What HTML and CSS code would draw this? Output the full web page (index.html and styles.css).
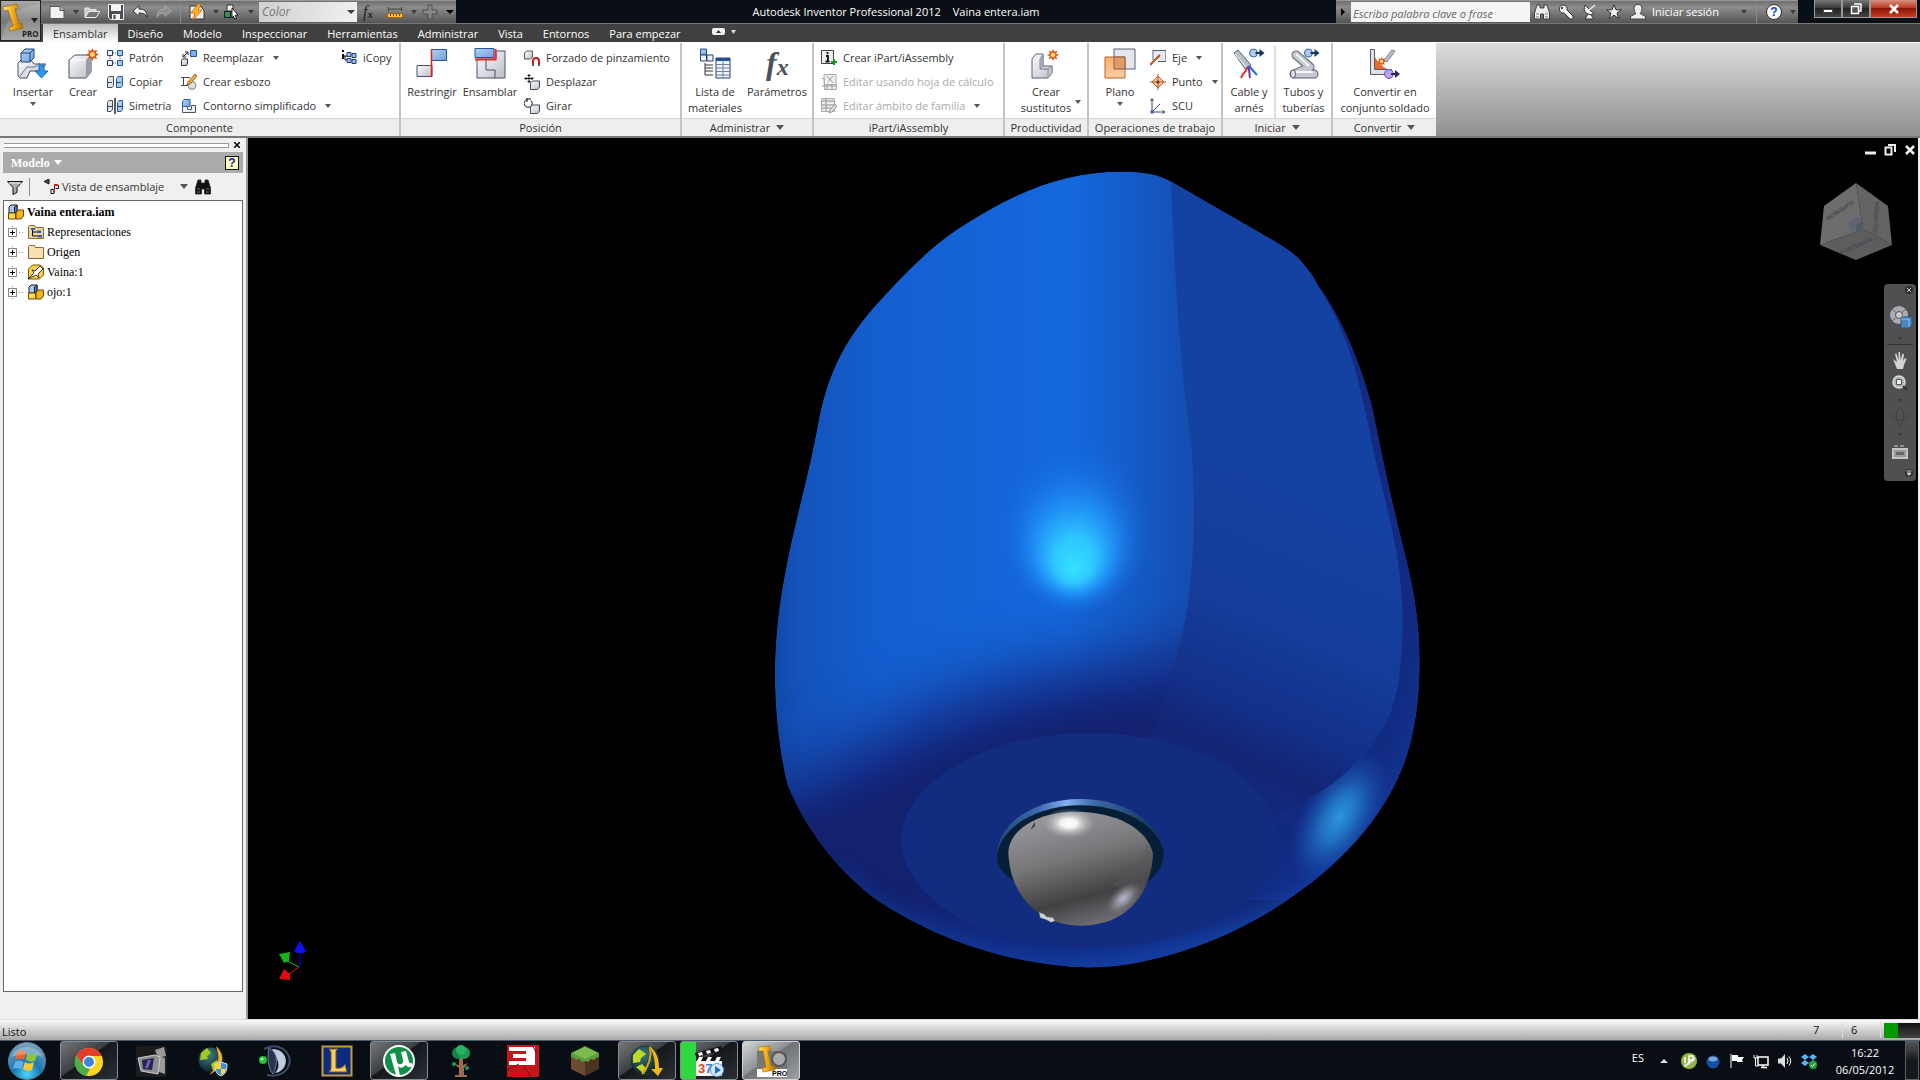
FILE: index.html
```html
<!DOCTYPE html>
<html lang="es">
<head>
<meta charset="utf-8">
<title>Autodesk Inventor Professional 2012 - Vaina entera.iam</title>
<link rel="stylesheet" href="styles.css">
</head>
<body>
<svg class="sprite" aria-hidden="true">
  <defs>
    <linearGradient id="g-steel" x1="0" y1="0" x2="1" y2="1"><stop offset="0" stop-color="#fff"/><stop offset="1" stop-color="#b9bec6"/></linearGradient>
    <linearGradient id="g-blue" x1="0" y1="0" x2="1" y2="1"><stop offset="0" stop-color="#b4d2f2"/><stop offset="1" stop-color="#6f9fdc"/></linearGradient>
    <linearGradient id="g-orange" x1="0" y1="0" x2="0" y2="1"><stop offset="0" stop-color="#fcae6c"/><stop offset="1" stop-color="#fbcda0"/></linearGradient>
    <linearGradient id="g-gold" x1="0" y1="0" x2="1" y2="0"><stop offset="0" stop-color="#ffe680"/><stop offset=".5" stop-color="#f0ac1c"/><stop offset="1" stop-color="#b87400"/></linearGradient>
    <radialGradient id="g-orb" cx=".5" cy=".85" r=".9"><stop offset="0" stop-color="#4fd6ff"/><stop offset=".4" stop-color="#1877b4"/><stop offset="1" stop-color="#8fa9ba"/></radialGradient>
    <radialGradient id="g-globe" cx=".4" cy=".3" r=".8"><stop offset="0" stop-color="#3f7d80"/><stop offset="1" stop-color="#04151e"/></radialGradient>
  </defs>
  <symbol id="new" viewBox="0 0 16 16"><path d="M1 2.500h10l4 4v8H1z" fill="#f2f2f2" stroke="#555"/><path d="M11 2.500v4h4" fill="#bbb" stroke="#555"/></symbol>
  <symbol id="open" viewBox="0 0 16 16"><path d="M1 13V4h4l1 1.500h6V8" fill="#ccc" stroke="#eee"/><path d="M1 13.500 5 7.500h11l-4 6z" fill="#777" stroke="#eee"/></symbol>
  <symbol id="save" viewBox="0 0 16 16"><path d="M.5.500h15v15h-13l-2-2z" fill="#4b4f57" stroke="#eee"/><path d="M3 1h10v6H3zM4 10h8v5H4z" fill="#f4f4f4"/><path d="M5.500 11h2v4h-2z" fill="#444"/></symbol>
  <symbol id="undo" viewBox="0 0 16 16"><path d="M1 7 7 1.500V5c5 0 8 2 8 8-1.500-3-4-4-8-4v3.500z" fill="#eee" stroke="#333"/></symbol>
  <symbol id="redo" viewBox="0 0 16 16"><path d="M15 7 9 1.500V5C4 5 1 7 1 13c1.500-3 4-4 8-4v3.500z" fill="#8d8d8d" stroke="#aaa"/></symbol>
  <symbol id="update" viewBox="0 0 16 16"><path d="M1 2h10l4 4v9H1z" fill="#eee" stroke="#333"/><path d="M9 0 2 9h4l-2 7 9-10H9l3-6z" fill="#ffb627" stroke="#d65a00" stroke-width=".8"/></symbol>
  <symbol id="pick" viewBox="0 0 16 16"><path d="M3 1h6v6H3z" fill="#eee" stroke="#333"/><path d="M.5 7.500h6v6h-6z" fill="#2f9a3b" stroke="#114"/><path d="m8 4 6 7-3 .3 1.500 3-2 .7-1-3L8 14z" fill="#fff" stroke="#000" stroke-width=".8"/></symbol>
  <symbol id="ruler" viewBox="0 0 16 16"><path d="M1.500 3v4M14.500 3v4M2 5h12" stroke="#444"/><path d="M.5 9.500h15v4H.5z" fill="#ffbe3b" stroke="#a76400"/><path d="M3.500 10v2m3-2v2m3-2v2m3-2v2" stroke="#704200"/></symbol>
  <symbol id="cross" viewBox="0 0 16 16"><path d="M6 1h4v5h5v4h-5v5H6v-5H1V6h5z" fill="#888" stroke="#4e4e4e"/></symbol>
  <symbol id="sun" viewBox="0 0 12 12"><path d="m6 0 1.300 2.800L10.200 1.700 9.200 4.700 12 6 9.200 7.300l1 3-2.900-1.100L6 12 4.700 9.200l-2.900 1.100 1-3L0 6l2.800-1.300-1-3 2.900 1.100z" fill="#e0541c"/><circle cx="6" cy="6" r="2.300" fill="#ffe16b"/></symbol>
  <symbol id="insert" viewBox="0 0 32 32"><path d="M1 15 4 12h10l3 4h12l-6 7H13l-3 7H3l-2-2z" fill="url(#g-steel)" stroke="#44506a"/><path d="m3 28 7-9h8l5-4" fill="none" stroke="#6a7488"/><path d="M4 5 8 1h9v9l-4 4H4z" fill="url(#g-blue)" stroke="#1b4585"/><path d="M4 5h9v9m0-9 4-4" fill="none" stroke="#1b4585"/><path d="M22 17h5v6h4l-6.500 7L18 23h4z" fill="#2e97f5" stroke="#1065b8"/></symbol>
  <symbol id="create" viewBox="0 0 32 32"><path d="m2 12 6-5h16v17l-5 6H2z" fill="url(#g-steel)" stroke="#475068"/><path d="M19 30V12l5-5v17z" fill="#999ea6"/><path d="M3 12h16" fill="none" stroke="#fff"/><use href="#sun" x="19" y="0" width="13" height="13"/></symbol>
  <symbol id="pattern" viewBox="0 0 16 16"><path d="M.5.500h5v5h-5zM.5 10.500h5v5h-5z" fill="#eef2f8" stroke="#253d70"/><path d="M10.500.500h5v5h-5zM10.500 10.500h5v5h-5z" fill="#a9c8ee" stroke="#1d55a4"/><path d="M6 3h4M6 13h4M3 6v4m10-4v4" stroke="#253d70" stroke-dasharray="1 1"/></symbol>
  <symbol id="copy" viewBox="0 0 16 16"><path d="M.5 4.500 2 2.500h4.500v9l-1.500 2H.5z" fill="#dfe3ea" stroke="#444d60"/><path d="M9.500 4.500l1.500-2h4.500v9l-1.500 2H9.500z" fill="#a9c8ee" stroke="#1d55a4"/><path d="M.5 8.500H5M9.500 8.500H14" stroke="#345"/></symbol>
  <symbol id="mirror" viewBox="0 0 16 16"><path d="M.5 4.500 2 2.500h3.500v9l-1.500 2H.5z" fill="#dfe3ea" stroke="#444d60"/><path d="M10.500 4.500l1.500-2h3.500v9l-1.500 2h-3.500z" fill="#a9c8ee" stroke="#1d55a4"/><path d="M0 8.500h5M10 8.500h5" stroke="#345"/><path d="M8 0v16" stroke="#223" stroke-width="1.500"/></symbol>
  <symbol id="replace" viewBox="0 0 16 16"><path d="M9.500.500h6v6h-6z" fill="#7eb0ee" stroke="#1d55a4"/><path d="m.5 10.500 1-1.500h5v5l-1 1.500h-5z" fill="url(#g-steel)" stroke="#333"/><path d="m2.500 6.500 4-4M4 2h3v3M2 4v3h3" fill="none" stroke="#222"/></symbol>
  <symbol id="sketch" viewBox="0 0 16 16"><path d="M0 3.500h9M2.500 3.500v8M0 11.500h7" fill="none" stroke="#444"/><circle cx="11" cy="11.500" r="4" fill="#ddd" stroke="#888"/><path d="m6 11 1-3 7-8 2 2-7 8z" fill="#f5a93c" stroke="#704c12" stroke-width=".8"/></symbol>
  <symbol id="contour" viewBox="0 0 16 16"><path d="M1.500 3.500 3 1.500h6v7H1.500z" fill="url(#g-blue)" stroke="#1f5fae"/><path d="M1.500 8.500h5v3h4v-4h4v7h-13z" fill="#eceff3" stroke="#4b5468"/></symbol>
  <symbol id="icopy" viewBox="0 0 16 16"><path d="M2 0v2M2 4v5" stroke="#111" stroke-width="2"/><path d="M6 2.500h4v4H6zM11 3.500h4v4h-4zM6 8.500h4v4H6zM11 9.500h4v4h-4z" fill="#9cc0ec" stroke="#1c3b78"/><path d="M3 6h3M4 6v4h2" stroke="#111" fill="none"/></symbol>
  <symbol id="constrain" viewBox="0 0 32 32"><path d="M1 17.500h15v11H1z" fill="url(#g-steel)" stroke="#44506a"/><path d="M15.500 1.500h15v11h-15z" fill="url(#g-blue)" stroke="#26559b"/><path d="M15.500 1v28" stroke="#f01818" stroke-width="1.500"/></symbol>
  <symbol id="assemble" viewBox="0 0 32 32"><path d="M3 11h19V3h9v27H3z" fill="url(#g-steel)" stroke="#44506a"/><path d="M12 12v10h9v8" fill="none" stroke="#44506a"/><path d="M1 .5h19v9H1z" fill="url(#g-blue)" stroke="#26559b"/><path d="M1 11.500h20.500V1" fill="none" stroke="#ed2525" stroke-width="2"/></symbol>
  <symbol id="grip" viewBox="0 0 16 16"><path d="m.5 3 2-2h6v6l-2 2h-6z" fill="url(#g-steel)" stroke="#555"/><path d="M9 15v-4a3 3 0 0 1 6 0v4" fill="none" stroke="#c02222" stroke-width="2"/><path d="M8 14h2v2H8zM14 14h2v2h-2z" fill="#555"/></symbol>
  <symbol id="move" viewBox="0 0 16 16"><path d="M5 0v9M.500 4.500h9M3.500 1.500h3M3.500 7.500h3M2 3v3m6-3v3" stroke="#111"/><path d="m6.500 9 2-2h7v6l-2 2.500h-7z" fill="url(#g-steel)" stroke="#444d60"/></symbol>
  <symbol id="rotate" viewBox="0 0 16 16"><path d="M3 1.500a4 4 0 1 0 4 1M3 0v4M3 1h4" fill="none" stroke="#111"/><path d="m6.500 9 2-2h7v6l-2 2.500h-7z" fill="url(#g-steel)" stroke="#444d60"/></symbol>
  <symbol id="bom" viewBox="0 0 32 32"><path d="M1.500 1h6v6h-6z" fill="url(#g-blue)" stroke="#26559b"/><path d="M1.500 7h6v6h-6zM8 7h6v6H8z" fill="#eef2f8" stroke="#26406f"/><path d="M6 15v12M6 17h8M6 20h8M6 23h8M6 27h8" stroke="#333" fill="none"/><path d="M17 10h14v20H17z" fill="#f1f5fa" stroke="#26406f"/><path d="M17 10h14v3H17z" fill="#244d8b"/><path d="M17 16.500h14M17 20h14M17 23.500h14M17 27h14M24 12v18" stroke="#6c83a4"/></symbol>
  <symbol id="ipart" viewBox="0 0 16 16"><path d="M.5.500h12v13H.5z" fill="#eee" stroke="#444"/><path d="M6.500 2v2M5 6h2v5M4.500 11.500h4" stroke="#111" stroke-width="1.800" fill="none"/><path d="M13 9v6M10 12h6" stroke="#109a18" stroke-width="2"/></symbol>
  <symbol id="excel" viewBox="0 0 16 16"><path d="M3 .5h12v10H3zM.500 4.500h3v11h12v-5" fill="#eee" stroke="#aaa"/><path d="m6 2 6 7m0-7L6 9M1 12h14M6 10v5m5-5v5" stroke="#999"/></symbol>
  <symbol id="family" viewBox="0 0 16 16"><path d="M.5.500h13v13H.5z" fill="#eee" stroke="#aaa"/><path d="M0 3h14M0 7h14M0 10h10M5 1v12" stroke="#aaa" stroke-width="1.500"/><path d="m8 15 1-3 5-6 2 2-5 6z" fill="#ddd" stroke="#999"/></symbol>
  <symbol id="substitute" viewBox="0 0 32 32"><path d="m2 11 4-5h7v12h9v7l-4 5H2z" fill="url(#g-steel)" stroke="#566074"/><path d="m10 11 3-5v12l-3 3z" fill="#b0b5bd" stroke="#8b929f"/><path d="M10 21h8v9l4-5v-7l-4 3z" fill="#c3c7ce" stroke="#8b929f"/><use href="#sun" x="17" y="1" width="12" height="12"/></symbol>
  <symbol id="plane" viewBox="0 0 32 32"><path d="M10 1h21v20H10z" fill="#e3e6ea" stroke="#566074"/><path d="M1 9h20v21H1z" fill="url(#g-orange)" stroke="#b9602a"/><path d="M10 9h11v12H10z" fill="#df9a66" stroke="#8a5f50"/></symbol>
  <symbol id="axis" viewBox="0 0 16 16"><path d="M3 .5h13v11H8" fill="#e4e7ec" stroke="#566074"/><path d="M3 0v10" stroke="#566074"/><path d="m0 15 10-10" stroke="#b25526" stroke-width="2"/></symbol>
  <symbol id="point" viewBox="0 0 16 16"><path d="m8 2 6 6-6 6-6-6z" fill="#fac49a" stroke="#c06530"/><path d="M8 0v16M0 8h16" stroke="#b25526"/><circle cx="8" cy="8" r="1.500" fill="#6b2e0c"/></symbol>
  <symbol id="ucs" viewBox="0 0 16 16"><path d="M2 14V1M.5 3 2 .5 3.500 3M2 14h13m-2.500-1.500L15 14l-2.500 1.500M2 14l8-8" fill="none" stroke="#3e4657"/><path d="M.5 12.500h3v3h-3z" fill="#2465c9"/></symbol>
  <symbol id="export" viewBox="0 0 16 10"><circle cx="5" cy="5" r="4" fill="#aecbea" stroke="#33639f"/><path d="M7 4h4V1l5 4-5 4V6H7z" fill="#16355e"/></symbol>
  <symbol id="cable" viewBox="0 0 32 32"><path d="m1 5 4-3 13 15-5 5z" fill="#b8bec7" stroke="#59616f"/><path d="m2 6 12 14" stroke="#fff"/><path d="M14 19c0 6-4 4-6 11" stroke="#e03030" stroke-width="2" fill="none"/><path d="M15 18c2 4 1 7 2 12" stroke="#6c35a8" stroke-width="2" fill="none"/><path d="m16 18 8 9" stroke="#2470cf" stroke-width="2"/><use href="#export" x="15" y="0" width="17" height="10"/></symbol>
  <symbol id="tubes" viewBox="0 0 32 32"><path d="m8 7 14 12-16 7h20" fill="none" stroke="#555d6c" stroke-width="9" stroke-linejoin="round" stroke-linecap="round"/><path d="m8 7 14 12-16 7h20" fill="none" stroke="#c3c8d0" stroke-width="7" stroke-linejoin="round" stroke-linecap="round"/><path d="m8 6 13 12M7 24h18" stroke="#f4f6f8" stroke-width="2"/><ellipse cx="5" cy="26" rx="2.500" ry="4" fill="#dfe3e8" stroke="#555d6c"/><use href="#export" x="15" y="0" width="17" height="10"/></symbol>
  <symbol id="weld" viewBox="0 0 32 32"><path d="M1.500 1.500h4v20h17v5h-21z" fill="#dfe3e8" stroke="#555d6c"/><path d="M6 9q4 8 12 12H6z" fill="#ee6a2a"/><path d="m15 12 8-10 3 1-8 11z" fill="#b8bec7" stroke="#7d8593"/><use href="#sun" x="8" y="9" width="9" height="9"/><circle cx="20" cy="26" r="4.500" fill="#b9a6e8" stroke="#6b4bb4"/><path d="M22 25h4v-3l5 4-5 4v-3h-4z" fill="#33205e"/></symbol>
  <symbol id="binoc" viewBox="0 0 16 16"><path d="M3 1h3v3h4V1h3l2.500 8v6h-6v-5h-3v5h-6V9z" fill="currentColor" stroke="#222" stroke-width=".8"/><path d="M2 10h3M11 10h3M2 13h3M11 13h3" stroke="#777"/></symbol>
  <symbol id="key" viewBox="0 0 16 16"><path d="M5 1a4 4 0 0 1 4 5l6 6v3h-3L6 9a4 4 0 1 1-1-8z" fill="#f0f0f0" stroke="#333"/><circle cx="4" cy="4" r="1.200" fill="#444"/></symbol>
  <symbol id="dish" viewBox="0 0 16 16"><path d="M3 1c-3 7 3 11 9 9zM6 10l-3 5h9l-3-4" fill="#eee" stroke="#333"/><path d="m7 6 6-5" stroke="#eee" stroke-width="1.500"/></symbol>
  <symbol id="star" viewBox="0 0 16 16"><path d="m8 .8 2 5h5.300L11 9l1.700 5.500L8 11.200l-4.700 3.300L5 9 .7 5.800H6z" fill="#f0f0f0" stroke="#333"/></symbol>
  <symbol id="person" viewBox="0 0 16 16"><path d="M8 .5c3 0 4 2 4 4s-1 4-2 5l5.500 3v2.500H.5v-2.500l5.500-3c-1-1-2-3-2-5s1-4 4-4z" fill="#f0f0f0" stroke="#444"/></symbol>
  <symbol id="funnel" viewBox="0 0 16 16"><path d="M.5 2.500h15l-5.500 6v5l-4 2v-7z" fill="#aaa" stroke="#111"/><path d="M2 4h12" stroke="#eee"/></symbol>
  <symbol id="view" viewBox="0 0 16 16"><path d="M1 2.500 6 0v5z" fill="#555" stroke="#111"/><path d="M8 14.500h3v-4h-3zM11.500 10V6.500h4v3h-3" fill="#fff" stroke="#111"/><path d="M11 6h4M11 10.500v3" stroke="#e01b1b" stroke-width="2"/></symbol>
  <symbol id="asm" viewBox="0 0 16 16"><path d="m1 3 2-2h6v8H1z" fill="#a8cbe8" stroke="#111b33"/><path d="M6.500 9V3L9 1v7z" fill="#5c83b8" stroke="#111b33"/><path d="M.5 9h7v6h-7z" fill="#ffd84c" stroke="#6e4700"/><path d="m8 9 2-3h5.500v6L13 15H8z" fill="#f4b41c" stroke="#6e4700"/></symbol>
  <symbol id="folder" viewBox="0 0 16 16"><path d="M.5 14.500v-12l1-1h5l1 2h8v11z" fill="#f8dfb0" stroke="#8b6a3c"/></symbol>
  <symbol id="folder-tree" viewBox="0 0 16 16"><path d="M.5 14.500v-12l1-1h5l1 2h8v11z" fill="#f1d19c" stroke="#8b6a3c"/><path d="M4.500 5v7h6M4.500 8h5" stroke="#111" fill="none"/><path d="M3 4h4v2H3zM9 6.500h4v2.500H9zM10 11h4v2.500h-4z" fill="#2c64b0"/></symbol>
  <symbol id="part" viewBox="0 0 16 16"><path d="m.5 5 4-4h8l3 3v7l-4 4h-11z" fill="#f8d04a" stroke="#855200"/><path d="m0 15 6-6-2-3 3 1 5-5 3 3-5 5 1 4-3-3z" fill="#fff" stroke="#111" stroke-width=".8"/></symbol>
</svg>

<header class="titlebar">
  <button class="app" aria-label="Menú de la aplicación"><svg width="40" height="40" viewBox="0 0 40 40"><path d="M1 39C4 16 18 5 39 3v36z" fill="#fff" opacity=".16"/><path d="m2 6 14-3 1 4-3 1 4 15 3-1 1 5-13 3-1-4 4-1L7 9 3 10z" fill="url(#g-gold)" stroke="#8a5a00" stroke-width=".6"/><path d="M30 17h7l-3.500 5z" fill="#1e2530"/><text x="21" y="36" font-family="Open Sans, sans-serif" font-size="8" font-weight="bold" fill="#222">PRO</text></svg></button>
  <div class="qat">
    <button aria-label="Nuevo"><svg><use href="#new"/></svg></button><i class="caret"></i>
    <button aria-label="Abrir"><svg><use href="#open"/></svg></button>
    <button aria-label="Guardar"><svg><use href="#save"/></svg></button>
    <button aria-label="Deshacer"><svg><use href="#undo"/></svg></button>
    <button aria-label="Rehacer"><svg><use href="#redo"/></svg></button>
    <i class="vsep"></i>
    <button aria-label="Actualizar"><svg><use href="#update"/></svg></button><i class="caret"></i>
    <button aria-label="Seleccionar"><svg><use href="#pick"/></svg></button><i class="caret"></i>
    <span class="combo"><select aria-label="Color"><option>Color</option></select><i class="caret"></i></span>
    <button aria-label="Parámetros" class="fx"><i>f</i><b>x</b></button>
    <button aria-label="Medir"><svg><use href="#ruler"/></svg></button><i class="caret"></i>
    <button aria-label="Añadir"><svg><use href="#cross"/></svg></button>
    <i class="caret more"></i>
  </div>
  <h1 class="title"><span>Autodesk Inventor Professional 2012</span><span>Vaina entera.iam</span></h1>
  <div class="info">
    <button class="expand" aria-label="Contraer"><i></i></button>
    <input type="text" placeholder="Escriba palabra clave o frase" aria-label="Buscar">
    <button aria-label="Buscar"><svg><use href="#binoc"/></svg></button>
    <button aria-label="Suscripción"><svg><use href="#key"/></svg></button>
    <button aria-label="Comunicación"><svg><use href="#dish"/></svg></button>
    <button aria-label="Favoritos"><svg><use href="#star"/></svg></button>
    <button class="login"><svg><use href="#person"/></svg>Iniciar sesión</button>
    <i class="caret"></i><i class="vsep"></i>
    <button class="help" aria-label="Ayuda">?</button><i class="caret"></i>
  </div>
  <div class="winbtns">
    <button aria-label="Minimizar"><svg width="12" height="10"><path d="M1.500 5.500h9v3h-9z" fill="#fff" stroke="#444"/></svg></button>
    <button aria-label="Restaurar"><svg width="12" height="12"><path d="M4 1h7v7H9M1.500 3.500h7v7h-7z" fill="#555" stroke="#fff" stroke-width="1.500"/></svg></button>
    <button class="close" aria-label="Cerrar"><svg width="12" height="10"><path d="m2 1 8 8m0-8L2 9" stroke="#fff" stroke-width="2.500"/></svg></button>
  </div>
</header>

<nav class="tabs">
  <a href="#" class="on">Ensamblar</a><a href="#">Diseño</a><a href="#">Modelo</a><a href="#">Inspeccionar</a><a href="#">Herramientas</a><a href="#">Administrar</a><a href="#">Vista</a><a href="#">Entornos</a><a href="#">Para empezar</a>
  <button class="collapse" aria-label="Minimizar cinta"><svg width="24" height="10"><rect x="0" y="1" width="13" height="7" rx="2" fill="#f2f2f2"/><path d="m4 6 2.500-3L9 6z" fill="#333"/><path d="M19 3h5l-2.500 4z" fill="#ddd"/></svg></button>
</nav>

<div class="ribbon">
  <section class="panel p-comp">
    <div class="tools">
      <button class="big w58"><svg><use href="#insert"/></svg><span>Insertar</span><i class="caret"></i></button>
      <button class="big w42"><svg><use href="#create"/></svg><span>Crear</span></button>
      <div class="col w74">
        <button class="sm"><svg><use href="#pattern"/></svg>Patrón</button>
        <button class="sm"><svg><use href="#copy"/></svg>Copiar</button>
        <button class="sm"><svg><use href="#mirror"/></svg>Simetría</button>
      </div>
      <div class="col w160">
        <button class="sm"><svg><use href="#replace"/></svg>Reemplazar<i class="caret"></i></button>
        <button class="sm"><svg><use href="#sketch"/></svg>Crear esbozo</button>
        <button class="sm"><svg><use href="#contour"/></svg>Contorno simplificado<i class="caret"></i></button>
      </div>
      <div class="col"><button class="sm"><svg><use href="#icopy"/></svg>iCopy</button></div>
    </div>
    <h2>Componente</h2>
  </section>
  <section class="panel p-pos">
    <div class="tools">
      <button class="big w54"><svg><use href="#constrain"/></svg><span>Restringir</span></button>
      <button class="big w62"><svg><use href="#assemble"/></svg><span>Ensamblar</span></button>
      <div class="col">
        <button class="sm"><svg><use href="#grip"/></svg>Forzado de pinzamiento</button>
        <button class="sm"><svg><use href="#move"/></svg>Desplazar</button>
        <button class="sm"><svg><use href="#rotate"/></svg>Girar</button>
      </div>
    </div>
    <h2>Posición</h2>
  </section>
  <section class="panel p-adm">
    <div class="tools">
      <button class="big w58"><svg><use href="#bom"/></svg><span>Lista de<br>materiales</span></button>
      <button class="big w66"><span class="bigfx"><i>f</i><b>x</b></span><span>Parámetros</span></button>
    </div>
    <h2>Administrar<i class="caret big-caret"></i></h2>
  </section>
  <section class="panel p-ipart">
    <div class="tools"><div class="col">
      <button class="sm"><svg><use href="#ipart"/></svg>Crear iPart/iAssembly</button>
      <button class="sm" disabled><svg><use href="#excel"/></svg>Editar usando hoja de cálculo</button>
      <button class="sm" disabled><svg><use href="#family"/></svg>Editar ámbito de familia<i class="caret"></i></button>
    </div></div>
    <h2>iPart/iAssembly</h2>
  </section>
  <section class="panel p-prod">
    <div class="tools"><button class="big w74"><svg><use href="#substitute"/></svg><span>Crear<br>sustitutos</span></button><i class="caret side"></i></div>
    <h2>Productividad</h2>
  </section>
  <section class="panel p-oper">
    <div class="tools">
      <button class="big w54"><svg><use href="#plane"/></svg><span>Plano</span><i class="caret"></i></button>
      <div class="col">
        <button class="sm"><svg><use href="#axis"/></svg>Eje<i class="caret"></i></button>
        <button class="sm"><svg><use href="#point"/></svg>Punto<i class="caret"></i></button>
        <button class="sm"><svg><use href="#ucs"/></svg>SCU</button>
      </div>
    </div>
    <h2>Operaciones de trabajo</h2>
  </section>
  <section class="panel p-ini">
    <div class="tools">
      <button class="big w50"><svg><use href="#cable"/></svg><span>Cable y<br>arnés</span></button>
      <i class="divider"></i>
      <button class="big half"><svg><use href="#tubes"/></svg><span>Tubos y<br>tuberías</span></button>
    </div>
    <h2>Iniciar<i class="caret big-caret"></i></h2>
  </section>
  <section class="panel p-conv">
    <div class="tools"><button class="big half"><svg><use href="#weld"/></svg><span>Convertir en<br>conjunto soldado</span></button></div>
    <h2>Convertir<i class="caret big-caret"></i></h2>
  </section>
</div>

<main class="work">
  <aside class="browser">
    <div class="grip"><i></i><button aria-label="Cerrar panel"><svg width="6" height="6"><path d="m0 0 6 6M6 0 0 6" stroke="#000" stroke-width="1.500"/></svg></button></div>
    <div class="bhead"><button class="model">Modelo<i class="caret big-caret"></i></button><button class="note" aria-label="Ayuda">?</button></div>
    <div class="btools">
      <button aria-label="Filtro"><svg width="16" height="16"><use href="#funnel"/></svg></button><i class="vsep"></i>
      <button class="viewsel"><svg width="16" height="16"><use href="#view"/></svg>Vista de ensamblaje<i class="caret big-caret"></i></button>
      <button class="find" aria-label="Buscar"><svg width="16" height="16"><use href="#binoc"/></svg></button>
    </div>
    <ul class="tree">
      <li class="root"><svg><use href="#asm"/></svg>Vaina entera.iam</li>
      <li><b></b><svg><use href="#folder-tree"/></svg>Representaciones</li>
      <li><b></b><svg><use href="#folder"/></svg>Origen</li>
      <li><b></b><svg><use href="#part"/></svg>Vaina:1</li>
      <li><b></b><svg><use href="#asm"/></svg>ojo:1</li>
    </ul>
  </aside>
  <section class="viewport">
    <svg class="scene" viewBox="0 0 1670 881" preserveAspectRatio="xMidYMid meet" role="img" aria-label="Modelo Vaina entera">
      <defs>
        <linearGradient id="front" gradientUnits="userSpaceOnUse" x1="76" y1="0" x2="990" y2="0"><stop offset="0" stop-color="#1349a8"/><stop offset=".06" stop-color="#1453bb"/><stop offset=".25" stop-color="#145fd0"/><stop offset=".7" stop-color="#1468dc"/><stop offset=".85" stop-color="#145cc8"/><stop offset="1" stop-color="#144daf"/></linearGradient>
        <linearGradient id="side" gradientUnits="userSpaceOnUse" x1="1150" y1="600" x2="960" y2="1120"><stop offset="0" stop-color="#1442a2"/><stop offset=".5" stop-color="#143c98"/><stop offset=".78" stop-color="#133088"/><stop offset=".95" stop-color="#132474"/><stop offset="1" stop-color="#13277a"/></linearGradient>
        <radialGradient id="spec" gradientUnits="userSpaceOnUse" cx="0" cy="0" r="1" fx="0" fy=".5" gradientTransform="translate(728 705) scale(170 165)"><stop offset="0" stop-color="#35e0ff"/><stop offset=".25" stop-color="#2ec8ff"/><stop offset=".5" stop-color="#2298fa" stop-opacity=".85"/><stop offset=".75" stop-color="#1c7eec" stop-opacity=".35"/><stop offset="1" stop-color="#1468dc" stop-opacity="0"/></radialGradient>
        <radialGradient id="spec2"><stop offset="0" stop-color="#2b96de"/><stop offset=".35" stop-color="#2583d0" stop-opacity=".8"/><stop offset="1" stop-color="#1550b4" stop-opacity="0"/></radialGradient>
        <linearGradient id="ring" x1="0" x2="1" y1="0" y2="0"><stop offset="0" stop-color="#1c4a78"/><stop offset=".25" stop-color="#3b6cb0"/><stop offset=".42" stop-color="#82b0f0"/><stop offset=".58" stop-color="#3d6aa8"/><stop offset="1" stop-color="#0f2f50"/></linearGradient>
        <linearGradient id="ball" gradientUnits="userSpaceOnUse" x1="300" y1="155" x2="390" y2="495"><stop offset="0" stop-color="#98989c"/><stop offset=".4" stop-color="#77777a"/><stop offset=".76" stop-color="#414143"/><stop offset=".9" stop-color="#5c5c60"/><stop offset="1" stop-color="#6c6c71"/></linearGradient>
        <radialGradient id="shine"><stop offset="0" stop-color="#fff"/><stop offset=".3" stop-color="#fff" stop-opacity=".9"/><stop offset="1" stop-color="#aaa" stop-opacity="0"/></radialGradient>
        <radialGradient id="shine2"><stop offset="0" stop-color="#b8b8cc"/><stop offset=".4" stop-color="#a0a0b2" stop-opacity=".75"/><stop offset="1" stop-color="#777" stop-opacity="0"/></radialGradient>
        <filter id="soft" x="-30%" y="-50%" width="160%" height="200%" color-interpolation-filters="sRGB"><feGaussianBlur stdDeviation="64"/></filter>
        <filter id="soft2" x="-30%" y="-50%" width="160%" height="200%" color-interpolation-filters="sRGB"><feGaussianBlur stdDeviation="26"/></filter>
        <path id="hull" d="M830 40C880 40 915 47 935 57L1170 173C1215 195 1240 222 1260 255C1310 315 1345 385 1375 475C1400 580 1420 660 1448 755C1470 830 1480 890 1480 960C1478 1030 1470 1085 1450 1135C1415 1225 1330 1320 1200 1395C1080 1470 900 1526 760 1526C560 1520 400 1460 290 1395C200 1335 140 1260 103 1185C85 1120 76 1050 76 980C76 870 100 770 133 655C150 595 157 570 168 520C188 425 220 365 290 295C350 238 405 188 470 150C590 82 700 40 830 40Z"/>
        <clipPath id="hullclip"><use href="#hull"/></clipPath>
        <clipPath id="sideclip"><path d="M1175 1235C1330 1180 1425 1110 1443 880L1600 800V1568H100V1400L763 1300Z"/></clipPath>
      </defs>
      <g transform="translate(492 12) scale(.4592 .5357)">
        <g clip-path="url(#hullclip)">
          <use href="#hull" fill="url(#front)"/>
          <path d="M-300 1290L-100 1240L150 1165C300 1090 500 985 800 955L1300 920V1900H-300Z" fill="#13257a" filter="url(#soft)"/>
          <path d="M-300 1330L-100 1290C250 1250 420 1100 800 1048L1300 1020V1900H-300Z" fill="#13226e" filter="url(#soft2)"/>
          <ellipse cx="728" cy="705" rx="170" ry="165" fill="url(#spec)"/>
          <path d="M938 57C950 300 960 400 984 560C992 680 990 750 975 850C955 960 915 1050 890 1100L1000 1300L1500 1250V200L1170 100Z" fill="url(#side)"/>
          <path d="M1260 255C1330 350 1350 440 1370 520C1395 640 1443 740 1443 880C1443 1000 1420 1050 1400 1080C1350 1160 1270 1205 1175 1235L1000 1400H1600V200Z" fill="#122a80"/>
          <path d="M150 1460C330 1400 500 1440 763 1440H1600V1900H0Z" fill="#122a80" filter="url(#soft2)"/>
          <g clip-path="url(#sideclip)">
            <path d="M1560 900C1530 1200 1380 1380 1050 1500L600 1620V1800H1800V900Z" fill="#144fb8" filter="url(#soft)"/>
            <ellipse cx="0" cy="0" rx="80" ry="145" fill="url(#spec2)" transform="translate(1305 1245) rotate(38)"/>
          </g>
          <path d="M200 1370C350 1500 560 1535 760 1535C960 1535 1120 1480 1300 1380" fill="none" stroke="#154cb8" stroke-width="40" opacity=".75" filter="url(#soft2)"/>
          <ellipse cx="763" cy="1289" rx="411" ry="201" fill="#122c80"/>
        </g>
      </g>
      <g transform="translate(712 622) scale(.3333)">
        <path d="M111 280C118 185 225 117 361 117S600 185 611 280C608 320 590 345 562 365H162C125 335 113 310 111 280Z" fill="url(#ring)"/>
        <path d="M111 285C125 195 240 136 361 136S592 190 611 275C610 320 595 340 562 365H162C125 335 111 320 111 285Z" fill="#061f36"/>
        <path d="M145 275C150 205 240 155 345 155C470 155 560 205 579 280C576 400 500 497 365 497C230 497 148 400 145 275Z" fill="url(#ball)"/>
        <ellipse cx="327" cy="190" rx="80" ry="46" fill="url(#shine)"/>
        <path d="M460 372Q540 330 560 250L577 285Q570 360 530 420Z" fill="#59595c" opacity=".4"/>
        <ellipse cx="0" cy="0" rx="64" ry="34" fill="url(#shine2)" transform="translate(490 415) rotate(-42)"/>
        <path d="m225 185-14 25 14-12z" fill="#333"/>
        <path d="m237 457 16 6 6 7 20 3 6 10-12 4-14-8-18-6z" fill="#d2d2d6" stroke="#666"/>
      </g>
      <g transform="translate(21 802)">
        <path d="M31 27V8" stroke="#00f"/><path d="M31 1l6 10-3 2h-6l-3-2z" fill="#1010f0"/><path d="m30 27-12-6" stroke="#12c81a"/><path d="m10 14 11-2-1 9-5 2z" fill="#12b41c"/><path d="M30 27 17 36" stroke="#e81010"/><path d="m15 29 6 5v6l-11-1z" fill="#e00c0c"/>
      </g>
    </svg>
    <div class="docbtns">
      <button aria-label="Minimizar documento"><svg width="12" height="12"><path d="M1 7.500h11v3H1z" fill="#eee"/></svg></button>
      <button aria-label="Restaurar documento"><svg width="12" height="12"><path d="M4 1h7v7M1.500 3.500h6v7h-6z" fill="none" stroke="#eee" stroke-width="2"/></svg></button>
      <button aria-label="Cerrar documento"><svg width="12" height="12"><path d="m2 2 8 8m0-8-8 8" stroke="#eee" stroke-width="2.500"/></svg></button>
    </div>
    <svg class="cube" width="74" height="80" viewBox="0 0 74 80" role="img" aria-label="ViewCube">
      <path d="M37 2 5 25 1 64 44 48z" fill="#6d6d6d"/><path d="m37 2 32 23 4 39-29-16z" fill="#646464"/><path d="M44 48 1 64l36 15 36-15z" fill="#5d5d5d"/>
      <path d="m37 36 7 4v8l-7 4-7-4v-8z" fill="#5f656c"/><path d="m37 44 7-4v8l-7 4z" fill="#545a62"/>
      <g font-family="Liberation Sans, sans-serif" font-weight="bold" font-size="6" fill="#454a52"><text transform="translate(33 19) rotate(147)">SUPERIOR</text><text transform="translate(58 53) rotate(-86)">IZQUIERDA</text><text transform="translate(22 74) rotate(-24)">POSTERIOR</text></g>
    </svg>
    <div class="navbar">
      <svg width="32" height="196" viewBox="0 0 32 196" aria-hidden="true">
        <circle cx="25" cy="6" r="4" fill="#2e2e2e"/><path d="m23 4 4 4m0-4-4 4" stroke="#ccc"/>
        <circle cx="15" cy="31" r="9" fill="#a9adb2"/><path d="m8 25 14 12m0-12L8 37" stroke="#666"/><circle cx="15" cy="31" r="3.500" fill="#ccc" stroke="#555"/><path d="m17 35 3-2h8v8l-3 3h-8z" fill="#4a88be" stroke="#24588c"/><path d="M17 35h8v8" fill="none" stroke="#8cbde6"/>
        <path d="M13 53h5l-2.500 3zM13 115h5l-2.500 3zM13 149h5l-2.500 3z" fill="#373b42"/><path d="M3 60.500h26" stroke="#333"/>
        <path d="m9 75 4 3-2-8 1.500-.5 2 7V68H16l.5 8 2-6.500 1.500.5-1 7 2-3 1.500 1-2.500 6-1 4h-6z" fill="#d2d2d2"/>
        <circle cx="15" cy="98" r="6" fill="#aeb5b5" stroke="#d8dcdc" stroke-width="1.500"/><path d="M12.500 95.500h5v5h-5z" fill="#eee" stroke="#555"/><path d="m19 102 4 4" stroke="#333" stroke-width="2"/>
        <path d="M8 130c-2 3 1 6 8 6s9-3 8-6M16 124c-5 2-5 14 0 17 5-3 5-15 0-17z" fill="none" stroke="#3c4048"/>
        <path d="M9 165h14v9H9z" fill="#999" stroke="#c4c4c4" stroke-width="2"/><path d="M12 168h8v3h-8z" fill="#666"/><path d="M10 162h10" stroke="#ccc" stroke-dasharray="4 2"/>
        <circle cx="25" cy="189" r="4" fill="#2e2e2e"/><path d="M22.500 187h5M23 189h4l-2 2.500z" stroke="#ccc" fill="#ccc"/>
      </svg>
    </div>
  </section>
</main>

<footer class="status"><span class="msg">Listo</span><span class="cell">7</span><span class="cell">6</span><i class="meter"></i></footer>

<div class="taskbar">
  <button class="orb" aria-label="Inicio"><svg width="40" height="40" viewBox="0 0 40 40"><circle cx="20" cy="20" r="18.500" fill="url(#g-orb)" stroke="#53809a"/><path d="M10 11q4-3 9 0l-2 8q-4-3-9 0z" fill="#f0642a"/><path d="M20.500 12q5 3 10 0l-2.500 8q-4 2-9-1z" fill="#8cc63c"/><path d="M8 21q4-3 8.500 0l-2 7q-4-2-8.500 0z" fill="#5fb2ee"/><path d="M18 21q4 3 9 0l-2 8q-4 2-9-1z" fill="#ffc830"/><path d="M4 16a17 15 0 0 1 32 0q-16-6-32 0z" fill="#fff" opacity=".28"/></svg></button>
  <button class="task run" aria-label="Chrome"><svg width="32" height="32" viewBox="0 0 32 32"><circle cx="16" cy="17" r="14" fill="#ffd41f"/><path d="M3.500 10.500A14 14 0 0 1 28.500 11H16l-6 9z" fill="#e33b2e"/><path d="M3.500 10.500 10 20l7 4-4 7A14 14 0 0 1 3.500 10.500z" fill="#4fae48"/><circle cx="16" cy="17" r="6.500" fill="#fff"/><circle cx="16" cy="17" r="5" fill="#3f86d8"/></svg></button>
  <button class="task" aria-label="Grabador"><svg width="32" height="32" viewBox="0 0 32 32"><rect x="1" y="1" width="31" height="31" rx="3" fill="#1c1c1e"/><path d="m20 5 9-3 2 9-8 2zM24 11l6 2v16l-6-2z" fill="#999"/><path d="m3 13 17-3 5 2-2 17-17-3z" fill="#8f8f93" stroke="#ccc"/><path d="m7 15 12-2-2 12-9-1z" fill="#25264a"/><path d="m13 15 3 0-3 8h-3z" fill="#6a63c4"/></svg></button>
  <button class="task" aria-label="Red segura"><svg width="32" height="32" viewBox="0 0 32 32"><circle cx="14" cy="15" r="12.500" fill="url(#g-globe)"/><path d="m4 8 6-5 4 5-4 3 1 3-8 1zM14 19l6-4 3 5-7 6z" fill="#a3c820"/><path d="M19 1c10 9 8 22-7 29 11-10 11-18 7-29z" fill="#f0b21c"/><path d="m24 17 6 2c0 6-1 10-6 12-5-2-6-6-6-12z" fill="#3c90dc" stroke="#dde"/><path d="M24 18v6h-5.500l-.5-5zM24 24h5c-1 4-3 5-5 6z" fill="#ffd33b"/></svg></button>
  <button class="task" aria-label="TeamSpeak"><svg width="32" height="32" viewBox="0 0 32 32"><path d="M5 4C20-4 34 8 30 20c-3 9-13 12-22 10" fill="none" stroke="#3d4c66" stroke-width="2"/><path d="M13 4c18 0 18 22 3 24 7-7 2-15-3-24z" fill="#c0cbe0"/><path d="M10 3c8 4 10 14 4 26-5-5-6-18-4-26z" fill="#28344c" stroke="#6b7a98"/><circle cx="4" cy="15" r="4" fill="#23c23b"/><circle cx="3" cy="14" r="1.500" fill="#aef5a8"/></svg></button>
  <button class="task" aria-label="League"><svg width="32" height="32" viewBox="0 0 32 32"><rect x="1.500" y="1.500" width="29" height="29" fill="#0c2c84" stroke="#c89a3c" stroke-width="2"/><path d="M8 4h9l-2 2v17q7 1 9-4l2 8H8l2-3V7z" fill="#f3cc6c" stroke="#7b5316"/></svg></button>
  <button class="task run" aria-label="uTorrent"><svg width="34" height="34" viewBox="0 0 34 34"><circle cx="17" cy="17" r="15" fill="#11904a" stroke="#fff" stroke-width="2"/><path d="M8 10l5-1 2 9q1 3 4 2 3-1 2-4l-2-8 5-1 3 11q1 2 3 1l1 3q-5 3-7-1-5 5-8 1l2 10-4-1z" fill="#fff"/></svg></button>
  <button class="task" aria-label="Terraria"><svg width="32" height="32" viewBox="0 0 32 32"><path d="M14 12h4v8l5-2-4 5v7h3v2H10v-2h4z" fill="#9a6b4c"/><path d="M14 20l-5-1 5 4z" fill="#9a6b4c"/><circle cx="13" cy="8" r="6" fill="#17834b"/><circle cx="19" cy="8" r="6" fill="#1d9a55"/><circle cx="16" cy="5" r="5" fill="#2bb365"/><circle cx="9" cy="19" r="2" fill="#1d9a55"/><circle cx="22" cy="23" r="2" fill="#1d9a55"/></svg></button>
  <button class="task" aria-label="Juego 3"><svg width="32" height="32" viewBox="0 0 32 32"><path d="M0 0h32v32H0z" fill="#c4141c"/><path d="M2 2h26v18H2v-4h17v-3H6V9h13V6H2z" fill="#fff"/><path d="m16 20 8 12M0 25l12-6M25 0l5 9" stroke="#7b0c12"/></svg></button>
  <button class="task" aria-label="Minecraft"><svg width="32" height="32" viewBox="0 0 32 32"><path d="m2 8 14 6v17L2 24z" fill="#6d4a33"/><path d="m30 8-14 6v17l14-7z" fill="#4c3222"/><path d="M16 1 2 8v4l3 1 2 2 3-1 3 3 3-1 3 1 3-3 3 1 2-2 3-1V8z" fill="#5f9a3b"/><path d="m16 2 13 6-13 6L3 8z" fill="#7cbc4c"/></svg></button>
  <button class="task run" aria-label="jDownloader"><svg width="32" height="32" viewBox="0 0 32 32"><circle cx="14" cy="15" r="14" fill="url(#g-globe)" stroke="#123a40"/><path d="m2 10 6-6 7 5-5 4-1 4-7 1zM5 22l6-3 5 5-3 5z" fill="#c1d827"/><path d="M19 2c2 10-2 20-8 27" fill="none" stroke="#e0a312" stroke-width="2"/><path d="M18 1c8 5 10 14 10 22h4l-5 8-7-7h4c0-8-1-16-6-23z" fill="#f7b518"/></svg></button>
  <button class="task run progress" aria-label="Reproductor"><svg width="32" height="32" viewBox="0 0 32 32"><path d="m2 8 26-7 1 5L3 12z" fill="#111"/><path d="m5 8 4-1 1 3-4 1zM13 6l4-1 1 3-4 1zM21 4l4-1 1 3-4 1z" fill="#fff"/><path d="M3 12h26v19H3z" fill="#f6f6f6"/><path d="M3 12h26v4H3z" fill="#111"/><path d="M6 12h4l-2 4H4zM15 12h4l-2 4h-4zM24 12h4l-2 4h-4z" fill="#fff"/><text x="5" y="28" font-family="Liberation Sans, sans-serif" font-weight="bold" font-size="13"><tspan fill="#d84b1c">3</tspan><tspan fill="#3a7fd2">7</tspan></text><circle cx="24" cy="25" r="6.500" fill="#d8eafa" stroke="#5a98d8"/><path d="m22 21 6 4-6 4z" fill="#1d6cc2"/></svg></button>
  <button class="task run active" aria-label="Inventor"><svg width="32" height="32" viewBox="0 0 32 32"><path d="M2 6h30v26H2z" fill="#777"/><circle cx="24" cy="14" r="7" fill="#aaa" stroke="#555" stroke-width="2"/><path d="M2 24h30v8H2z" fill="#fff"/><path d="m3 2 12-1 1 4-3 1 3 15 4-1v5l-12 2-1-4 4-1L8 6H4z" fill="url(#g-gold)" stroke="#9a6400" stroke-width=".6"/><text x="17" y="31" font-family="Liberation Sans, sans-serif" font-size="7" font-weight="bold">PRO</text></svg></button>
  <div class="tray">
    <span class="lang">ES</span>
    <button class="up" aria-label="Mostrar iconos ocultos"><i></i></button>
    <svg width="16" height="16" viewBox="0 0 16 16"><circle cx="8" cy="8" r="8" fill="#90b83c"/><path d="m2 13 12-9v3L5 14z" fill="#ddd"/><path d="M4 4v6M8 3h4v4H8zV10" stroke="#fff" stroke-width="1.500" fill="none"/></svg>
    <svg width="16" height="16" viewBox="0 0 16 16"><circle cx="8" cy="9" r="6.500" fill="#154fa6"/><ellipse cx="8" cy="6" rx="4.500" ry="2.500" fill="#79a4de"/></svg>
    <svg width="16" height="16" viewBox="0 0 16 16"><path d="M2 1v14" stroke="#fff"/><path d="M3 2h6v2h6l-2 3 1 2H8V8H3z" fill="#fff"/></svg>
    <svg width="16" height="16" viewBox="0 0 16 16"><path d="M5 4h10v8H5zM8 14.500h6M10 12v2" fill="none" stroke="#fff" stroke-width="1.500"/><path d="M1 2v3h3V2M2.500 5v8h3" fill="none" stroke="#fff"/></svg>
    <svg width="16" height="16" viewBox="0 0 16 16"><path d="M1 5.500h3L8 1v14l-4-4.500H1z" fill="#ddd"/><path d="M10 5q2 3 0 6M12 3.500q3.500 4.500 0 9" stroke="#fff" fill="none"/></svg>
    <svg width="16" height="16" viewBox="0 0 16 16"><path d="m4 1 4 3-4 3-4-3zM12 1l4 3-4 3-4-3zM4 7l4 3-4 3-4-3zM12 7l4 3-4 3-4-3z" fill="#58b0ee"/><circle cx="12" cy="12" r="4" fill="#1ea33c"/><path d="m10 12 1.500 1.500L14 10.500" stroke="#fff" fill="none"/></svg>
    <time class="clock">16:22<br>06/05/2012</time>
    <button class="desk" aria-label="Mostrar escritorio"></button>
  </div>
</div>
</body>
</html>
```
FILE: styles.css
```css
* { box-sizing: border-box; }
body {
  margin: 0;
  height: 100vh;
  display: flex;
  flex-direction: column;
  overflow: hidden;
  background: #404040;
  color: #333;
  font: 11px/16px "Open Sans", "Noto Sans", sans-serif;
}
button { margin: 0; padding: 0; border: 0; background: none; color: inherit; font: inherit; }
h1, h2, ul { margin: 0; padding: 0; font: inherit; }
.sprite { position: absolute; width: 0; height: 0; }

.caret { flex: none; width: 0; height: 0; border: 3px solid transparent; border-top: 4px solid #555; border-bottom: 0; }
.big-caret { border-width: 4px; border-top-width: 5px; border-bottom: 0; }
.vsep { flex: none; width: 1px; height: 100%; background: #8a8a8a; }

/* title bar */
.titlebar { position: relative; flex: none; height: 24px; display: flex; background: #0a0e15; border-bottom: 1px solid #777; color: #fff; }
.app { position: absolute; z-index: 2; left: 0; top: 0; width: 41px; height: 41px; border: 1px solid #222; background: linear-gradient(#aaa, #777 50%, #9a9a9a); }
.app svg { display: block; }
.qat { flex: none; width: 456px; padding-left: 49px; display: flex; align-items: center; background: linear-gradient(#6f6f6f, #8c8c8c 30%, #555); border-top: 1px solid #999; }
.qat button, .info button { flex: none; width: 16px; height: 16px; margin-right: 8px; }
.qat svg, .info svg { display: block; width: 16px; height: 16px; }
.qat .caret { margin-right: 5px; border-top-color: #3c3c3c; }
.qat .vsep { margin-right: 8px; }
.combo { position: relative; flex: none; width: 98px; height: 20px; margin-right: 6px; }
.combo select { display: block; appearance: none; width: 100%; height: 100%; padding: 0 3px; border: 0; border-radius: 0; background: linear-gradient(90deg, #d0d0d0, #f0f0f0); color: #777; font: italic 12px/20px "Open Sans", sans-serif; }
.qat .combo .caret { position: absolute; right: 2px; top: 8px; margin: 0; border-width: 4px; border-bottom: 0; }
.fx { display: flex; color: #222; font: 16px/16px "Liberation Serif", serif; }
.qat .fx { font: 16px/16px "Liberation Serif", serif; }
.fx b { font: italic bold 11px/20px "Liberation Serif", serif; }
.qat .more { margin: 0; border-width: 4px; border-bottom: 0; border-top-color: #000; }
.title { flex: 1; display: flex; justify-content: center; gap: 12px; line-height: 24px; }
.info { flex: none; width: 462px; display: flex; align-items: center; background: linear-gradient(#6f6f6f, #8c8c8c 30%, #555); border-top: 1px solid #999; }
.info .expand { width: 15px; height: 100%; margin: 0; }
.expand i { display: block; margin-left: 5px; width: 0; border: 4px solid transparent; border-left: 4px solid #000; border-right: 0; }
.info input { flex: none; width: 179px; height: 20px; margin-right: 4px; padding: 3px 2px 0; border: 0; background: #f4f4f4; font: italic 11px/16px "Open Sans", sans-serif; }
.info input::placeholder { color: #666; opacity: 1; }
.info button { color: #eee; }
.info .login { width: auto; display: flex; gap: 6px; margin-right: 22px; color: #fff; }
.info .caret { border-top-color: #3c3c3c; margin-right: 9px; }
.info .vsep { margin-right: 9px; }
.info .help { border: 1px solid #333; border-radius: 8px; background: #f6f8fc; color: #1746b0; font: bold 12px/14px "Liberation Sans", sans-serif; }
.winbtns { flex: none; width: 122px; height: 18px; padding: 0 3px 0 16px; display: flex; }
.winbtns button { width: 28px; display: flex; align-items: center; justify-content: center; border: 1px solid #999; border-top: 0; background: linear-gradient(#777, #333 50%, #222 50%, #444); }
.winbtns .close { flex: 1; background: linear-gradient(#d8907f, #b8321c 50%, #8c1607 50%, #c83d20); }

/* tabs */
.tabs { flex: none; height: 18px; padding-left: 43px; display: flex; background: #404040; }
.tabs a { padding: 0 10px; color: #fff; font-weight: 500; line-height: 20px; text-decoration: none; }
.tabs .on { background: linear-gradient(#bdbdbd, #fff); color: #333; font-weight: 400; }
.collapse { margin-left: 21px; }

/* ribbon */
.ribbon { flex: none; display: flex; background: linear-gradient(#dcdcdc, #909090); border-top: 1px solid #fff; border-bottom: 2px solid #777; }
.panel { flex: none; display: flex; flex-direction: column; background: #fff; border-right: 2px solid #c4c4c4; }
.p-comp { width: 401px; }
.p-pos { width: 281px; }
.p-adm { width: 132px; }
.p-ipart { width: 191px; }
.p-prod { width: 84px; }
.p-oper { width: 134px; }
.p-ini { width: 110px; }
.p-conv { width: 103px; border-right: 0; }
.tools { height: 75px; padding: 3px 0 0 4px; display: flex; }
.p-ini .tools, .p-conv .tools { padding-left: 1px; }
.panel h2 { height: 18px; display: flex; align-items: center; justify-content: center; gap: 6px; background: #eee; border-top: 1px solid #d6d6d6; }
.big { padding-top: 2px; display: flex; flex-direction: column; align-items: center; white-space: nowrap; }
.big svg, .bigfx { width: 32px; height: 32px; margin-bottom: 4px; }
.bigfx { display: flex; padding-left: 5px; color: #4b5058; font: bold 32px/30px "Liberation Serif", serif; }
.bigfx b { font: italic bold 24px/38px "Liberation Serif", serif; }
.big .caret { margin-top: 2px; }
.w42 { width: 42px; }
.w50 { width: 50px; }
.w54 { width: 54px; }
.w58 { width: 58px; }
.w62 { width: 62px; }
.w66 { width: 66px; }
.half { flex: 1; }
.w74 { width: 74px; }
.w160 { width: 160px; }
.divider { width: 2px; background: #ddd; }
.side { margin: 54px 0 0 -8px; }
.col { padding-left: 3px; display: flex; flex-direction: column; white-space: nowrap; }
.sm { height: 24px; display: flex; align-items: center; }
.sm svg { width: 16px; height: 16px; margin-right: 6px; }
.sm .caret { margin-left: 9px; }
.sm:disabled { color: #aaa; }

/* model browser */
.work { flex: 1; min-height: 0; display: flex; background: #f0f0f0; }
.browser { flex: none; width: 248px; padding: 2px 3px 27px; display: flex; flex-direction: column; border-right: 2px solid #999; }
.grip { height: 10px; padding: 0 3px 0 1px; display: flex; align-items: center; justify-content: space-between; margin-bottom: 2px; }
.grip > i { width: 225px; height: 5px; border: 1px solid #999; border-left: 0; background: #fff; }
.grip svg { display: block; }
.bhead { height: 21px; padding: 0 4px 0 8px; display: flex; align-items: center; justify-content: space-between; background: #ababab; color: #fff; }
.btools svg { display: block; }
.note { width: 14px; height: 14px; border: 1px solid #111; background: #fffcc0; color: #1418b0; font: bold 12px/12px "Liberation Sans", sans-serif; }
.model { display: flex; align-items: center; gap: 4px; font: bold 12px/16px "Liberation Serif", serif; }
.model .caret { border-top-color: #fff; }
.btools { height: 27px; padding: 0 4px; display: flex; align-items: center; }
.btools .vsep { height: 18px; margin: 0 13px 0 6px; }
.viewsel { width: 145px; display: flex; align-items: center; gap: 3px; white-space: nowrap; }
.viewsel .caret { margin-left: auto; }
.find { margin-left: 7px; color: #111; }
.tree { flex: 1; padding: 1px 0 0 4px; border: 1px solid #666; background: #fff; list-style: none; color: #000; font: 12px/20px "Liberation Serif", serif; }
.tree li { height: 20px; display: flex; align-items: center; }
.tree svg { width: 16px; height: 16px; margin-right: 3px; }
.tree .root { font-weight: bold; }
.tree b { width: 9px; height: 9px; margin-right: 11px; border: 1px solid #888; background: linear-gradient(#000, #000) center / 5px 1px no-repeat, linear-gradient(#000, #000) center / 1px 5px no-repeat; box-shadow: 0 -6px 0 -4px #888, 0 6px 0 -4px #888, 10px 0 0 -4px #888, 7px 0 0 -4px #888; }

/* viewport */
.viewport { position: relative; flex: 1; min-width: 0; margin-right: 2px; background: #000; }
.scene { display: block; width: 100%; height: 100%; }
.docbtns { position: absolute; top: 6px; right: 2px; display: flex; gap: 8px; }
.docbtns svg { display: block; }
.cube { position: absolute; top: 43px; right: 25px; }
.navbar { position: absolute; top: 146px; right: 2px; width: 32px; height: 197px; border-radius: 4px; background: #505050; }

/* status bar */
.status { flex: none; height: 21px; display: flex; align-items: center; border-top: 1px solid #ddd; background: linear-gradient(#fafafa, #a8a8a8); color: #111; }
.msg { flex: 1; padding: 3px 0 0 2px; }
.cell { width: 38px; height: 16px; padding-left: 8px; border-right: 1px solid #ddd; }
.meter { width: 36px; height: 15px; margin-left: 3px; background: linear-gradient(90deg, #009a00 14px, transparent 14px), linear-gradient(#111, #444); }

/* taskbar */
.taskbar { flex: none; height: 40px; padding-left: 7px; display: flex; gap: 4px; border-top: 1px solid #4b5866; background: #090d14; color: #fff; }
.orb { margin-right: 9px; }
.orb svg, .task svg { display: block; }
.task { width: 58px; display: flex; align-items: center; justify-content: center; border: 1px solid transparent; border-radius: 3px; }
.run { border-color: #848a90; background: linear-gradient(145deg, #777, #3a3e42 45%, #14181d 46%, #2b2f34); }
.progress { background: linear-gradient(90deg, #2fd83c 15px, transparent 15px), linear-gradient(145deg, #777, #3a3e42 45%, #14181d 46%, #2b2f34); }
.active { border-color: #d0d4d6; background: linear-gradient(145deg, #d6d6d6, #8d9093 45%, #707376 46%, #9da0a2); }
.tray { margin-left: auto; display: flex; align-items: center; }
.tray svg { margin-right: 8px; }
.lang { margin-right: 16px; padding-bottom: 5px; }
.up { margin-right: 13px; }
.up i { display: block; width: 0; border: 4px solid transparent; border-bottom-color: #ddd; border-top: 0; }
.clock { width: 80px; text-align: center; line-height: 17px; }
.desk { align-self: stretch; width: 14px; margin-right: 1px; border: 1px solid #5b6065; background: linear-gradient(#555, #15191e 50%); }
```
